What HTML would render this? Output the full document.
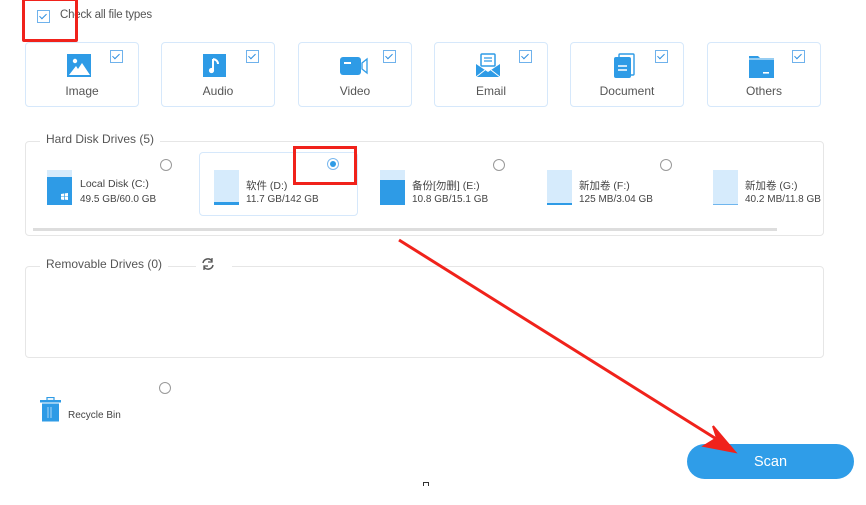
<!DOCTYPE html>
<html><head><meta charset="utf-8"><style>
*{margin:0;padding:0;box-sizing:border-box}
body{width:866px;height:505px;background:#fff;position:relative;overflow:hidden;font-family:"Liberation Sans","Noto Sans CJK SC",sans-serif;color:#555}
.a{position:absolute}
.card{position:absolute;top:42px;width:114px;height:65px;border:1.5px solid #d6e8fb;border-radius:4px}
.card .lbl{position:absolute;top:41px;left:0;right:0;text-align:center;font-size:12px;color:#555}
.cb{position:absolute;width:13px;height:13px;border:1.5px solid #6fb2ec;background:#fff}
.cb:after{content:"";position:absolute;left:3px;top:0.5px;width:3px;height:6px;border:solid #2f8fe0;border-width:0 1.8px 1.8px 0;transform:rotate(45deg)}
.card .cb{top:7px;left:84px}
.ic{position:absolute;left:40px;top:10px}
.radio{position:absolute;width:12px;height:12px;border:1.3px solid #999;border-radius:50%;background:#fff}
.drv{position:absolute;width:25px;height:35px;background:#d6ebfc}
.dn{position:absolute;font-size:10.5px;color:#444;white-space:nowrap}
.ds{position:absolute;font-size:10px;color:#444;white-space:nowrap}
</style></head><body>
<div class="cb" style="left:37px;top:10px"></div>
<div class="a" style="left:60px;top:9px;font-size:11.5px;color:#555;letter-spacing:-0.2px">Check all file types</div>
<div class="a" style="left:22px;top:-2px;width:56px;height:44px;border:3px solid #f0221b;border-radius:2px"></div>

<div class="card" style="left:25px"><svg class="ic" width="26" height="26" viewBox="0 0 26 26"><rect x="1" y="1" width="24" height="23" fill="#2e9be6"/><circle cx="9" cy="8" r="2.2" fill="#fff"/><path d="M3 22 L10 13 L12 16 L16 10 L24 22Z" fill="#fff"/></svg><div class="cb"></div><div class="lbl">Image</div></div>
<div class="card" style="left:161px"><svg class="ic" width="26" height="26" viewBox="0 0 26 26"><rect x="1" y="1" width="23" height="23" fill="#2e9be6"/><path d="M11 6v11" stroke="#fff" stroke-width="2"/><circle cx="9.5" cy="17.5" r="2.6" fill="#fff"/><path d="M11 6q5 1 5 5" stroke="#fff" stroke-width="2" fill="none"/></svg><div class="cb"></div><div class="lbl">Audio</div></div>
<div class="card" style="left:298px"><svg class="ic" width="30" height="26" viewBox="0 0 30 26"><rect x="1" y="4" width="21" height="18" rx="3" fill="#2e9be6"/><rect x="5" y="9" width="7" height="2" fill="#fff"/><path d="M23 10l5-4v14l-5-4Z" fill="none" stroke="#2e9be6" stroke-width="1.3"/></svg><div class="cb"></div><div class="lbl">Video</div></div>
<div class="card" style="left:434px"><svg class="ic" width="26" height="26" viewBox="0 0 26 26"><rect x="6" y="1" width="14" height="12" rx="1" fill="#fff" stroke="#2e9be6" stroke-width="1.5"/><path d="M9 5h8M9 8h8" stroke="#2e9be6" stroke-width="1.3"/><path d="M1 11l12 8 12-8v13H1Z" fill="#2e9be6"/><path d="M1 24l9-7M25 24l-9-7" stroke="#fff" stroke-width="1"/></svg><div class="cb"></div><div class="lbl">Email</div></div>
<div class="card" style="left:570px"><svg class="ic" width="26" height="26" viewBox="0 0 26 26"><rect x="8" y="1" width="15" height="21" rx="1" fill="#fff" stroke="#2e9be6" stroke-width="1.4"/><rect x="3" y="4" width="17" height="21" rx="2" fill="#2e9be6"/><path d="M7 13h9M7 17h9" stroke="#fff" stroke-width="1.6"/></svg><div class="cb"></div><div class="lbl">Document</div></div>
<div class="card" style="left:707px"><svg class="ic" width="28" height="26" viewBox="0 0 28 26"><path d="M1 3h9l2 2h14v20H1Z" fill="#2e9be6"/><path d="M1 6h25" stroke="#fff" stroke-width="1"/><rect x="15" y="19" width="6" height="1.6" fill="#fff"/></svg><div class="cb"></div><div class="lbl">Others</div></div>

<div class="a" style="left:25px;top:141px;width:799px;height:95px;border:1.5px solid #e6e6e6;border-radius:4px"></div>
<div class="a" style="left:40px;top:132px;padding:0 6px;background:#fff;font-size:12px;color:#555">Hard Disk Drives (5)</div>
<div class="a" style="left:199px;top:152px;width:159px;height:64px;border:1.5px solid #d6e8fb;border-radius:4px"></div>
<div class="a" style="left:33px;top:228px;width:744px;height:3px;background:#ddd"></div>

<div class="drv" style="left:47px;top:170px"><div class="a" style="left:0;bottom:0;width:25px;height:28px;background:#2e9be6"></div><svg class="a" style="left:14px;top:23px" width="7" height="7"><path d="M0 1l3-.5v3H0ZM3.7 0.4L7 0v3.5H3.7ZM0 4h3v3L0 6.5ZM3.7 4H7v3l-3.3-.4Z" fill="#fff"/></svg></div>
<div class="dn" style="left:80px;top:178px">Local Disk (C:)</div><div class="ds" style="left:80px;top:194px">49.5 GB/60.0 GB</div>
<div class="radio" style="left:160px;top:159px"></div>

<div class="drv" style="left:214px;top:170px"><div class="a" style="left:0;bottom:0;width:25px;height:3px;background:#2e9be6"></div></div>
<div class="dn" style="left:246px;top:178px">软件 (D:)</div><div class="ds" style="left:246px;top:194px">11.7 GB/142 GB</div>
<div class="radio" style="left:327px;top:158px;border-color:#7ab8ee"><div class="a" style="left:2px;top:2px;width:6px;height:6px;border-radius:50%;background:#2e9be6"></div></div>
<div class="a" style="left:293px;top:146px;width:64px;height:39px;border:3px solid #f0221b"></div>

<div class="drv" style="left:380px;top:170px"><div class="a" style="left:0;bottom:0;width:25px;height:25px;background:#2e9be6"></div></div>
<div class="dn" style="left:412px;top:178px">备份[勿删] (E:)</div><div class="ds" style="left:412px;top:194px">10.8 GB/15.1 GB</div>
<div class="radio" style="left:493px;top:159px"></div>

<div class="drv" style="left:547px;top:170px"><div class="a" style="left:0;bottom:0;width:25px;height:2px;background:#2e9be6"></div></div>
<div class="dn" style="left:579px;top:178px">新加卷 (F:)</div><div class="ds" style="left:579px;top:194px">125 MB/3.04 GB</div>
<div class="radio" style="left:660px;top:159px"></div>

<div class="drv" style="left:713px;top:170px"><div class="a" style="left:0;bottom:0;width:25px;height:1px;background:#6fb6ee"></div></div>
<div class="dn" style="left:745px;top:178px">新加卷 (G:)</div><div class="a" style="left:745px;top:194px;width:76px;overflow:hidden"><div class="ds" style="position:static">40.2 MB/11.8 GB</div></div>

<div class="a" style="left:25px;top:266px;width:799px;height:92px;border:1.5px solid #e6e6e6;border-radius:4px"></div>
<div class="a" style="left:40px;top:257px;padding:0 6px;background:#fff;font-size:12px;color:#555">Removable Drives (0)</div>
<div class="a" style="left:196px;top:256px;width:36px;height:16px;background:#fff"></div>
<svg class="a" style="left:200px;top:256px" width="16" height="16" viewBox="0 0 16 16"><path d="M3 7a5 5 0 0 1 9-2M13 9a5 5 0 0 1-9 2" stroke="#555" stroke-width="1.5" fill="none"/><path d="M12 2v4H8M4 14v-4h4" fill="none" stroke="#555" stroke-width="1.3"/></svg>

<svg class="a" style="left:40px;top:397px" width="21" height="25" viewBox="0 0 21 25"><rect x="7" y="0.5" width="7" height="3" fill="none" stroke="#2e9be6" stroke-width="1.2"/><rect x="0" y="3" width="21" height="2.5" fill="#2e9be6"/><rect x="2" y="6.5" width="17" height="18" fill="#2e9be6"/><path d="M8 10v11M11 10v11" stroke="#a8d4f6" stroke-width="1"/></svg>
<div class="a" style="left:68px;top:410px;font-size:10px;color:#444">Recycle Bin</div>
<div class="radio" style="left:159px;top:382px"></div>

<div class="a" style="left:687px;top:444px;width:167px;height:35px;border-radius:18px;background:#2f9de8;color:#fff;font-size:14.5px;text-align:center;line-height:37px">Scan</div>
<div class="a" style="left:423px;top:482px;width:6px;height:4px;border:1px solid #333;border-bottom:none"></div>

<svg class="a" style="left:0;top:0" width="866" height="505"><line x1="399" y1="240" x2="718" y2="440" stroke="#f0221b" stroke-width="3"/><path d="M735 452L713 426L717 438L704 446Z" fill="#f0221b" stroke="#f0221b" stroke-width="2"/></svg>
</body></html>
